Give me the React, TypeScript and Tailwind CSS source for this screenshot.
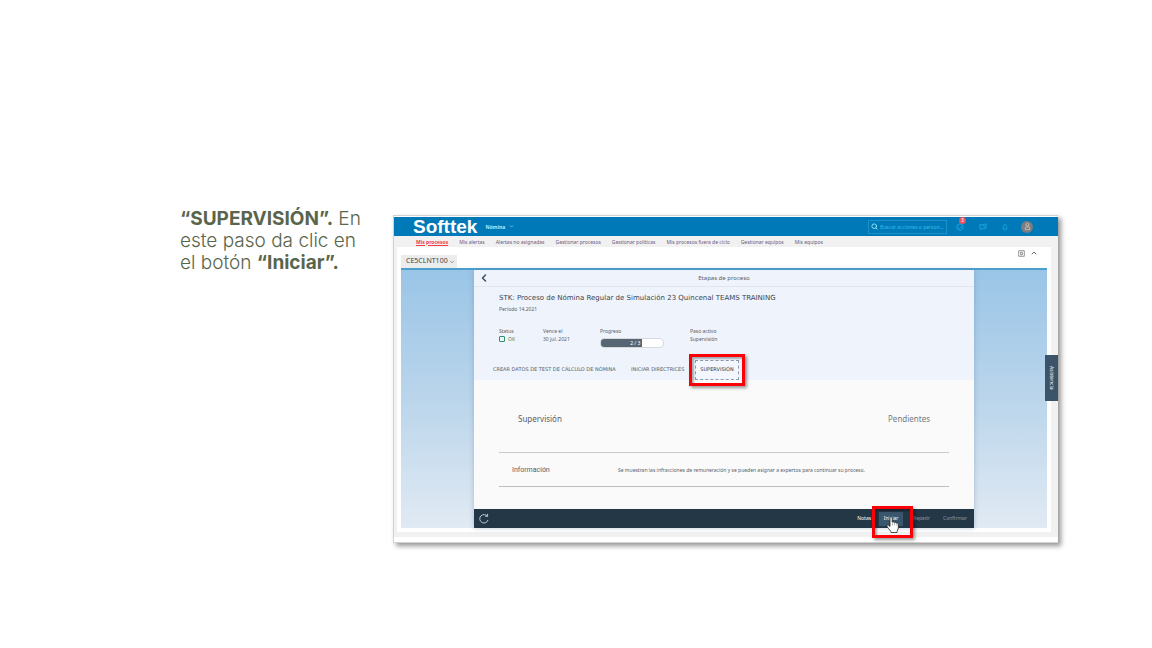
import React from "react";
import { ChevronDown, ChevronLeft, ChevronUp, Search } from "lucide-react";

const navItems = [
  "Mis procesos",
  "Mis alertas",
  "Alertas no asignadas",
  "Gestionar procesos",
  "Gestionar políticas",
  "Mis procesos fuera de ciclo",
  "Gestionar equipos",
  "Mis equipos",
];

function TopBar() {
  return (
    <header className="flex h-[19px] items-center bg-[#0079b8] pr-[25px] pl-[19px] text-[#4fd0f5]">
      <span className="font-['Liberation_Sans',sans-serif] text-[19px] leading-5 font-bold text-white">Softtek</span>
      <button className="ml-2 flex items-center gap-1 text-[5px] leading-[8px] font-bold text-[#a5ecff]">
        Nómina
        <ChevronDown className="size-[5px]" strokeWidth={3} />
      </button>
      <label className="ml-auto flex h-[14px] w-[79px] items-center gap-[2px] border border-[#1f90c8] pl-[2px]">
        <Search className="size-[7px] shrink-0 text-[#9be8ff]" strokeWidth={3} />
        <input
          aria-label="Buscar acciones o personas"
          placeholder="Buscar acciones o person..."
          className="h-2 w-full min-w-0 bg-transparent text-[5px] leading-[8px] outline-none placeholder:text-[#35bdec]"
        />
      </label>
      <button aria-label="Tareas pendientes" className="relative ml-[9px] flex size-2 items-center justify-center">
        <svg viewBox="0 0 10 10" className="size-2" fill="none" stroke="#22aee4">
          <circle cx="5" cy="5" r="4" />
          <path d="M3 5l1.5 1.5L7.5 4" />
        </svg>
        <span className="absolute -top-[6px] left-[3px] flex size-[7px] items-center justify-center rounded-full bg-[#e9535b] text-[5px] leading-[7px] text-white">
          3
        </span>
      </button>
      <button aria-label="Mensajes" className="ml-[15px] size-2">
        <svg viewBox="0 0 10 10" className="size-2" fill="none" stroke="#22aee4" strokeWidth="0.9">
          <path d="M5.5 2H1v5h1.2v1.7L4 7h4.5V5.2" />
          <path d="M6 1.5h3v3H6zM3 4h1.5" />
        </svg>
      </button>
      <button aria-label="Notificaciones" className="ml-[14px] size-2">
        <svg viewBox="0 0 10 10" className="size-2" fill="none" stroke="#22aee4" strokeWidth="0.9">
          <path d="M2 7.5c1-1 1-2 1-3.500a2 2 0 0 1 4 0c0 1.500 0 2.500 1 3.500zM4.200 9h1.600" />
        </svg>
      </button>
      <button aria-label="Cuenta" className="ml-3 flex size-3 items-center justify-center rounded-full bg-[#7b7d80]">
        <svg viewBox="0 0 10 10" className="size-[9px]" fill="none" stroke="#d9c8c0" strokeWidth="0.9">
          <circle cx="5" cy="3.200" r="1.600" />
          <path d="M2.500 8.500V7a1.500 1.500 0 0 1 1.500-1.500h2A1.500 1.500 0 0 1 7.500 7v1.500z" />
        </svg>
      </button>
    </header>
  );
}

function MainNav() {
  return (
    <nav className="flex h-[11px] items-center gap-[11px] pl-[22px] text-[5px] leading-[8px] whitespace-nowrap text-[#6d5a80]">
      {navItems.map((item, i) => (
        <a key={item} href="#" className={i === 0 ? "font-bold text-[#f0404a] underline" : ""}>
          {item}
        </a>
      ))}
    </nav>
  );
}

function Field({ label, className, children }: { label: string; className: string; children: React.ReactNode }) {
  return (
    <div className={className}>
      <dt>{label}</dt>
      <dd>{children}</dd>
    </div>
  );
}

function ProcessPanel() {
  return (
    <main className="mx-[73px] bg-[#fafafa] text-[#555e69] shadow-[0_0_5px_rgba(90,120,160,0.4)]">
      <div className="bg-[#eff3fc]">
        <div className="flex h-[17px] items-center border-b border-[#e2e6ee] pr-4 pl-1">
          <button aria-label="Volver" className="text-[#3d5064]">
            <ChevronLeft className="size-3" strokeWidth={3} />
          </button>
          <h1 className="flex-1 text-center text-[6px] leading-[8px]">Etapas de proceso</h1>
        </div>
        <div className="px-[25px] pt-[6px]">
          <h2 className="font-['DejaVu_Sans',sans-serif] text-[7px] leading-[10px] text-[#3b434d]">
            STK: Proceso de Nómina Regular de Simulación 23 Quincenal TEAMS TRAINING
          </h2>
          <p className="mt-[1px] text-[5px] leading-[10px]">Período 14.2021</p>
          <dl className="mt-[13px] flex text-[5px] leading-[8px]">
            <Field label="Status" className="w-11">
              <span className="flex items-center gap-[3px] text-[#438a63]">
                <span className="size-[6px] rounded-[1px] border border-[#2f9361]" />
                OK
              </span>
            </Field>
            <Field label="Vence el" className="w-[57px]">30 jul. 2021</Field>
            <Field label="Progreso" className="w-[90px]">
              <div className="mt-[3px] h-[10px] w-16 overflow-hidden rounded-[4px] border border-[#d4d9e0] bg-white">
                <div className="h-2 w-2/3 bg-[#586572] pr-[2px] text-right text-[5px] leading-[8px] text-white">2 / 3</div>
              </div>
            </Field>
            <Field label="Paso activo" className="flex-1">Supervisión</Field>
          </dl>
        </div>
        <div
          role="tablist"
          className="flex h-8 items-center pt-3 pl-[19px] font-['DejaVu_Sans',sans-serif] text-[5px] whitespace-nowrap"
        >
          <button role="tab" aria-selected="false" className="w-[138px] text-left">CREAR DATOS DE TEST DE CÁLCULO DE NÓMINA</button>
          <button role="tab" aria-selected="false" className="w-[64px] text-left">INICIAR DIRECTRICES</button>
          <button
            role="tab"
            aria-selected="true"
            className="relative flex h-5 w-[44px] items-center justify-center border border-dashed border-[#8c9bab] bg-[#f3f6fc] text-[#303943]"
          >
            SUPERVISIÓN
            <span className="pointer-events-none absolute -inset-[7px] border-[3px] border-[#fb0007] shadow-[2px_2px_3px_rgba(0,0,0,0.4),inset_2px_2px_2px_rgba(0,0,0,0.3)]" />
          </button>
        </div>
      </div>
      <section className="px-[25px] pb-[22px]">
        <div className="flex h-[73px] items-start justify-between border-b border-[#c9c9c9] pt-[33px] pr-[19px] pl-[19px] text-[8px] leading-[12px]">
          <h3>Supervisión</h3>
          <span className="text-[#737a82]">Pendientes</span>
        </div>
        <div className="flex h-[34px] items-center border-b border-[#bdbdbd] pl-[13px]">
          <h4 className="w-[106px] font-['Roboto',sans-serif] text-[7px] leading-[10px]">Información</h4>
          <p className="text-[5px] leading-[8px]">
            Se muestran las infracciones de remuneración y se pueden asignar a expertos para continuar su proceso.
          </p>
        </div>
      </section>
      <footer className="flex h-[19px] items-center bg-[#233746] pr-[7px] pl-1 text-[5px] text-[#8b98a2]">
        <button aria-label="Actualizar" className="mr-auto text-[#b9c9d4]">
          <svg viewBox="0 0 12 12" className="size-3" fill="none" stroke="currentColor">
            <path d="M9.500 3.500A4.200 4.200 0 1 0 10 7" />
            <path d="M7 3.200h2.600V.8" />
          </svg>
        </button>
        <button className="text-white">Notas</button>
        <div className="relative ml-[8px]">
          <button className="h-[14px] w-6 bg-[#3a566c] text-center text-white">Iniciar</button>
          <span className="pointer-events-none absolute -top-[6px] -left-[7px] h-8 w-[41px] border-[3px] border-[#fb0007] shadow-[2px_2px_3px_rgba(0,0,0,0.4),inset_2px_2px_2px_rgba(0,0,0,0.3)]" />
          <svg viewBox="0 0 14 18" className="pointer-events-none absolute top-1 left-[7px] h-[18px] w-[14px]">
            <path
              d="M4 1.800c0-1.500 2.200-1.500 2.200 0v4.400c.7-.7 1.900-.5 2.100.3.800-.5 1.800-.2 2 .6.900-.3 2 .2 2 1.300v3c0 2.500-1.300 3.200-1.300 5.100H5c0-1.800-2.300-3.200-3.900-6-.7-1.300.7-2.100 1.700-1.100L4 10.500z"
              fill="#fff"
              stroke="#222"
              strokeWidth="0.8"
            />
            <path d="M6.500 6.500v3M8.500 7v2.500M10.400 7.500v2" stroke="#777" strokeWidth="0.5" />
          </svg>
        </div>
        <button className="ml-[10px]">Repetir</button>
        <button className="ml-[13px]">Confirmar</button>
      </footer>
    </main>
  );
}

export default function App() {
  return (
    <div className="flex min-h-screen items-start bg-white pt-[208px] pr-[94px] pl-[180px] font-['Noto_Sans',sans-serif]">
      <p className="w-[213px] shrink-0 pr-6 font-['Inter','Open_Sans',sans-serif] text-[19px] leading-[22px] font-light text-[#59654c]">
        <strong className="font-bold">“SUPERVISIÓN”.</strong> En
        <br />
        este paso da clic en
        <br />
        el botón <strong className="font-bold">“Iniciar”.</strong>
      </p>
      <div className="relative mt-[7px] min-w-0 flex-1 border border-r-0 border-[#d2d2d2] bg-white pt-[1px] pb-[5px] shadow-[3px_3px_5px_rgba(0,0,0,0.42)]">
        <TopBar />
        <div className="bg-[#f1f1f1] pr-[7px] pb-[5px] pl-[3px]">
          <div className="-ml-[3px]">
            <MainNav />
          </div>
          <div className="bg-white px-1 pb-1">
            <div className="flex h-[21px] items-end justify-between">
              <button className="flex h-[13px] items-center gap-[1px] bg-[#ececec] pr-[2px] pl-[5px] text-[7px] text-[#454545]">
                CE5CLNT100
                <ChevronDown className="size-[6px]" />
              </button>
              <div className="mb-[11px] flex items-center gap-[5px] pr-[9px] text-[#6b6b6b]">
                <button aria-label="Abrir panel">
                  <svg viewBox="0 0 8 8" className="size-[7px]" fill="none" stroke="currentColor" strokeWidth="0.8">
                    <path d="M.8.800h6.400v6.400H.8zM3 2.500h2v3H3z" />
                  </svg>
                </button>
                <button aria-label="Contraer">
                  <ChevronUp className="size-2" strokeWidth={3} />
                </button>
              </div>
            </div>
            <div className="border-t-2 border-[#4a9fcd] bg-linear-to-b from-[#9ac5e7] via-[#bad5eb] to-[#e1eaf3]">
              <ProcessPanel />
            </div>
          </div>
        </div>
        <button className="absolute top-[139px] right-0 flex h-[46px] w-[13px] items-center justify-center bg-[#3c546a] text-[5px] text-white [writing-mode:vertical-rl]">
          Asistencia
        </button>
      </div>
    </div>
  );
}
